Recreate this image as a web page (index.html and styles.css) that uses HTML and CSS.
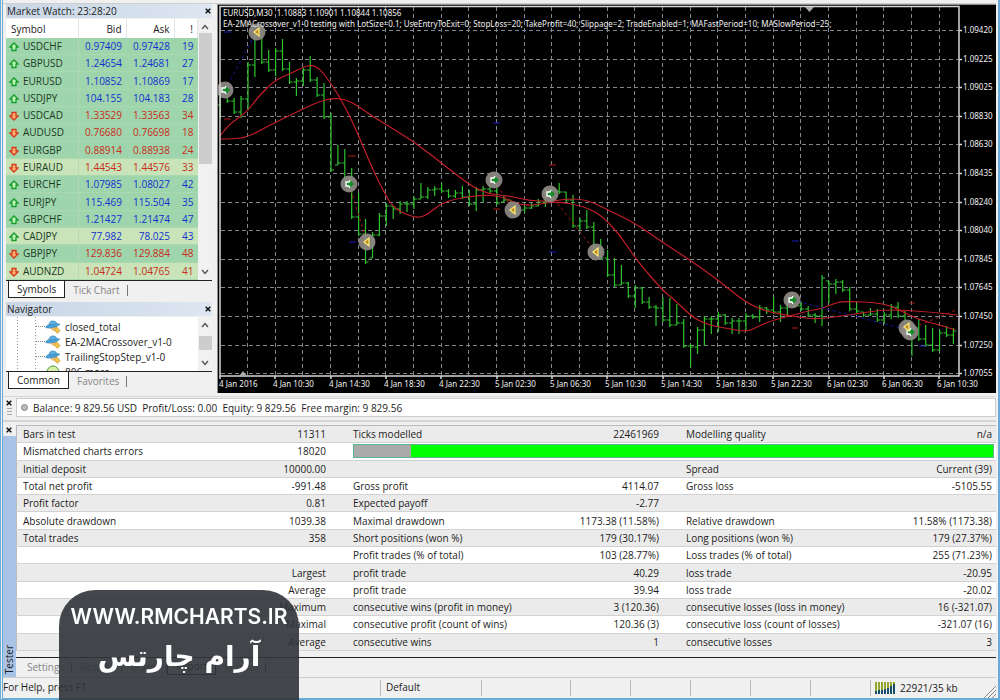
FILE: index.html
```html
<!DOCTYPE html>
<html lang="en">
<head>
<meta charset="utf-8">
<title>Strategy Tester</title>
<link rel="stylesheet" href="styles.css">
</head>
<body>
<svg class="defs" aria-hidden="true">
  <symbol id="up" viewBox="0 0 10 10"><path d="M5 1 9.200 5.200H7V8.500H3V5.200H.8Z" fill="#b9f5b4" stroke="#159a2b" stroke-width="1.300"/></symbol>
  <symbol id="down" viewBox="0 0 10 10"><path d="M5 9 9.200 4.800H7V1.500H3V4.800H.8Z" fill="#ffae70" stroke="#d33b1c" stroke-width="1.300"/></symbol>
  <symbol id="close" viewBox="0 0 6 6"><path d="M.7.7 5.300 5.300M5.300.7.700 5.300" stroke="#111" stroke-width="1.500"/></symbol>
  <symbol id="chev-up" viewBox="0 0 8 6"><path d="M1 5 4 1.500 7 5" fill="none" stroke="#555" stroke-width="1.400"/></symbol>
  <symbol id="chev-down" viewBox="0 0 8 6"><path d="M1 1 4 4.500 7 1" fill="none" stroke="#555" stroke-width="1.400"/></symbol>
  <symbol id="expert" viewBox="0 0 16 14">
    <path d="M3 6.500 8 11 13 5.500Z" fill="#f1c27a"/>
    <path d="M4 5C4 1.800 6 .6 8.500 1 10.500 1.300 12 2.500 12 4.500Z" fill="#5db0e2" stroke="#2f7fb5" stroke-width=".6"/>
    <path d="M.8 7.500C4 8.800 11 7.800 14.800 4.200 13 3.200 11.800 4 10 4.400 7 5.200 4.500 5.300 3.500 4.800 2 5.200.8 6.200.8 7.500Z" fill="#4aa3dc" stroke="#2f7fb5" stroke-width=".6"/>
    <path d="M11.500 7 15 10.500 12.500 13.200 9 10Z" fill="#f5c545" stroke="#b98a1c" stroke-width=".7"/>
  </symbol>
</svg>
<div class="window">
  <div class="toolbar-edge"></div>
  <div class="workspace">
    <aside class="side">
      <section class="panel market">
        <header class="title"><h2>Market Watch: 23:28:20</h2><button class="x" aria-label="Close Market Watch"><svg><use href="#close"/></svg></button></header>
        <div class="scroller">
          <table class="quotes">
            <colgroup><col class="c-sym"><col class="c-price"><col class="c-price"><col class="c-spread"></colgroup>
            <thead><tr><th>Symbol</th><th>Bid</th><th>Ask</th><th>!</th></tr></thead>
            <tbody>
              <tr class="rise"><td><svg><use href="#up"/></svg>USDCHF</td><td>0.97409</td><td>0.97428</td><td>19</td></tr>
              <tr class="rise"><td><svg><use href="#up"/></svg>GBPUSD</td><td>1.24654</td><td>1.24681</td><td>27</td></tr>
              <tr class="rise"><td><svg><use href="#up"/></svg>EURUSD</td><td>1.10852</td><td>1.10869</td><td>17</td></tr>
              <tr class="rise"><td><svg><use href="#up"/></svg>USDJPY</td><td>104.155</td><td>104.183</td><td>28</td></tr>
              <tr class="fall"><td><svg><use href="#down"/></svg>USDCAD</td><td>1.33529</td><td>1.33563</td><td>34</td></tr>
              <tr class="fall"><td><svg><use href="#down"/></svg>AUDUSD</td><td>0.76680</td><td>0.76698</td><td>18</td></tr>
              <tr class="fall"><td><svg><use href="#down"/></svg>EURGBP</td><td>0.88914</td><td>0.88938</td><td>24</td></tr>
              <tr class="fall pale"><td><svg><use href="#down"/></svg>EURAUD</td><td>1.44543</td><td>1.44576</td><td>33</td></tr>
              <tr class="rise"><td><svg><use href="#up"/></svg>EURCHF</td><td>1.07985</td><td>1.08027</td><td>42</td></tr>
              <tr class="rise"><td><svg><use href="#up"/></svg>EURJPY</td><td>115.469</td><td>115.504</td><td>35</td></tr>
              <tr class="rise"><td><svg><use href="#up"/></svg>GBPCHF</td><td>1.21427</td><td>1.21474</td><td>47</td></tr>
              <tr class="rise pale"><td><svg><use href="#up"/></svg>CADJPY</td><td>77.982</td><td>78.025</td><td>43</td></tr>
              <tr class="fall"><td><svg><use href="#down"/></svg>GBPJPY</td><td>129.836</td><td>129.884</td><td>48</td></tr>
              <tr class="fall pale"><td><svg><use href="#down"/></svg>AUDNZD</td><td>1.04724</td><td>1.04765</td><td>41</td></tr>
            </tbody>
          </table>
          <div class="bar"><svg><use href="#chev-up"/></svg><i class="thumb long"></i><svg><use href="#chev-down"/></svg></div>
        </div>
        <nav class="tabs"><button class="tab on">Symbols</button><button class="tab">Tick Chart</button></nav>
      </section>
      <section class="panel navigator">
        <header class="title"><h2>Navigator</h2><button class="x" aria-label="Close Navigator"><svg><use href="#close"/></svg></button></header>
        <div class="scroller">
          <ul class="tree">
            <li><svg><use href="#expert"/></svg>closed_total</li>
            <li><svg><use href="#expert"/></svg>EA-2MACrossover_v1-0</li>
            <li><svg><use href="#expert"/></svg>TrailingStopStep_v1-0</li>
            <li><svg viewBox="0 0 16 14"><circle cx="8" cy="7" r="6" fill="#d8f0a8" stroke="#4d9a4a"/></svg>806 more...</li>
          </ul>
          <div class="bar"><svg><use href="#chev-up"/></svg><i class="thumb short"></i><svg><use href="#chev-down"/></svg></div>
        </div>
        <nav class="tabs"><button class="tab on">Common</button><button class="tab">Favorites</button></nav>
      </section>
    </aside>
    <main class="chart"><svg id="chart" viewBox="218 5 778 388" role="img" aria-label="EURUSD M30 price chart"></svg></main>
  </div>
  <section class="account">
    <div class="grip"><button class="x" aria-label="Close account bar"><svg><use href="#close"/></svg></button><i></i></div>
    <p><i class="dot"></i>Balance: 9 829.56 USD&nbsp; Profit/Loss: 0.00&nbsp; Equity: 9 829.56&nbsp; Free margin: 9 829.56</p>
  </section>
  <section class="tester">
    <div class="spine"><button class="x" aria-label="Close Tester"><svg><use href="#close"/></svg></button><h2>Tester</h2></div>
    <div class="result">
      <table class="report">
        <colgroup><col class="k1"><col class="v1"><col class="k"><col class="v"><col class="k"><col class="v3"></colgroup>
        <tbody>
          <tr><td>Bars in test</td><td>11311</td><td>Ticks modelled</td><td>22461969</td><td>Modelling quality</td><td>n/a</td></tr>
          <tr><td>Mismatched charts errors</td><td>18020</td><td colspan="4" class="quality"><div><i></i></div></td></tr>
          <tr><td>Initial deposit</td><td>10000.00</td><td></td><td></td><td>Spread</td><td>Current (39)</td></tr>
          <tr><td>Total net profit</td><td>-991.48</td><td>Gross profit</td><td>4114.07</td><td>Gross loss</td><td>-5105.55</td></tr>
          <tr><td>Profit factor</td><td>0.81</td><td>Expected payoff</td><td>-2.77</td><td></td><td></td></tr>
          <tr><td>Absolute drawdown</td><td>1039.38</td><td>Maximal drawdown</td><td>1173.38 (11.58%)</td><td>Relative drawdown</td><td>11.58% (1173.38)</td></tr>
          <tr><td>Total trades</td><td>358</td><td>Short positions (won %)</td><td>179 (30.17%)</td><td>Long positions (won %)</td><td>179 (27.37%)</td></tr>
          <tr><td></td><td></td><td>Profit trades (% of total)</td><td>103 (28.77%)</td><td>Loss trades (% of total)</td><td>255 (71.23%)</td></tr>
          <tr><td></td><td>Largest</td><td>profit trade</td><td>40.29</td><td>loss trade</td><td>-20.95</td></tr>
          <tr><td></td><td>Average</td><td>profit trade</td><td>39.94</td><td>loss trade</td><td>-20.02</td></tr>
          <tr><td></td><td>Maximum</td><td>consecutive wins (profit in money)</td><td>3 (120.36)</td><td>consecutive losses (loss in money)</td><td>16 (-321.07)</td></tr>
          <tr><td></td><td>Maximal</td><td>consecutive profit (count of wins)</td><td>120.36 (3)</td><td>consecutive loss (count of losses)</td><td>-321.07 (16)</td></tr>
          <tr><td></td><td>Average</td><td>consecutive wins</td><td>1</td><td>consecutive losses</td><td>3</td></tr>
        </tbody>
      </table>
      <nav class="tabs"><button class="tab">Settings</button><button class="tab">Results</button><button class="tab">Graph</button><button class="tab on">Report</button><button class="tab">Journal</button></nav>
    </div>
  </section>
  <footer class="status">
    <span class="help">For Help, press F1</span><span class="profile">Default</span><span class="w1"></span><span class="w2"></span><span class="w2"></span><span class="w2"></span><span class="w2"></span><span class="w2"></span>
    <span class="net"><svg viewBox="0 0 22 12"><path d="M1 0V12M4 0V12M7 0V12M10 0V12M13 0V12M16 0V12M19 0V12" stroke="#94a52e" stroke-width="2"/><path d="M1 9V12M4 8V12M7 8V12M10 7V12M13 6V12M16 4V12M19 2V12" stroke="#164d6b" stroke-width="2"/></svg>22921/35 kb</span>
    <svg class="size" viewBox="0 0 12 12"><path d="M0 12 12 0M4 12 12 4M8 12 12 8" stroke="#888"/></svg>
  </footer>
</div>
<div class="watermark"><strong>WWW.RMCHARTS.IR</strong><b lang="fa" dir="rtl">آرام چارتس</b></div>
<script src="chart.js"></script>
</body>
</html>
```
FILE: styles.css
```css
* { box-sizing: border-box; }
body {
  margin: 0;
  background: #f0f0f0;
  color: #1c1c1c;
  font: 10px/14px "Open Sans", "Noto Sans", sans-serif;
}
h2, p, ul { margin: 0; padding: 0; font-size: inherit; font-weight: normal; }
button { border: 0; padding: 0; background: none; font: inherit; color: inherit; }
table { border-collapse: collapse; table-layout: fixed; }
.defs { position: absolute; width: 0; height: 0; }

.window {
  display: flex;
  flex-direction: column;
  min-height: 100vh;
  padding-right: 2px;
  border: solid #69acd8;
  border-width: 0 2px 2px 0;
  border-left: 3px double #69acd8;
}
.toolbar-edge { height: 4px; border-bottom: 1px solid #cfcfcf; }
.workspace { display: flex; align-items: flex-start; gap: 2px; }
.side { width: 212px; flex: none; padding: 0 3px; }
.chart { flex: 1; min-width: 0; background: #000; border: solid #8f8f8f; border-width: 1px 0 0 1px; }
.chart svg { display: block; width: 100%; height: auto; }

.title {
  display: flex;
  justify-content: space-between;
  align-items: center;
  height: 14px;
  padding: 0 1px;
  background: linear-gradient(90deg, #c9d6e6, #dde6f1);
}
.x { display: flex; padding: 0; }
.x svg { width: 6px; height: 6px; }
.scroller { display: flex; background: #fff; }
.bar {
  display: flex;
  flex-direction: column;
  align-items: center;
  width: 14px;
  padding: 5px 0;
  background: #f1f1f1;
}
.bar svg { width: 8px; height: 6px; flex: none; }
.bar svg:last-child { margin-top: auto; }
.thumb { width: 13px; margin-top: 3px; background: #cdcdcd; }
.long { height: 131px; }
.short { height: 14px; margin-top: 8px; }

.market .title { margin-bottom: 1px; }
.market .scroller { height: 261px; }
.quotes { flex: 1; height: 261px; }
.quotes thead tr { height: 19px; }
.c-sym { width: 72px; }
.c-price { width: 48px; }
.quotes th { font-weight: normal; text-align: right; border-right: 1px solid #e4e4e4; }
.quotes th, .quotes td { padding: 0 4px 0 0; line-height: 14px; white-space: nowrap; }
.quotes th:first-child { text-align: left; padding-left: 5px; }
.quotes td { text-align: right; }
.quotes td:first-child { text-align: left; color: #1b3a25; border-right: 1px solid #b4d9b4; }
.quotes td:first-child svg { width: 10px; height: 10px; margin: 0 4px 0 3px; vertical-align: -2px; }
.quotes tbody tr { background: #9fd5ac; border-bottom: 1px solid #a9d8b1; }
.quotes tbody .pale { background: #c8e4b8; }
.rise { color: #1231cf; }
.fall { color: #c92b21; }

.tabs { display: flex; align-items: flex-start; border-top: 1px solid #222; padding-left: 2px; color: #858585; }
.tab { height: 17px; padding: 0 8px; position: relative; }
.tab:not(.on)::after { content: ""; position: absolute; right: 0; top: 4px; height: 11px; border-right: 1px solid #777; }
.tab.on { background: #fff; color: #1c1c1c; border: 1px solid #222; border-top: 0; }
.side .tabs { height: 22px; }

.tree { flex: 1; height: 54px; padding-top: 2px; overflow: hidden; list-style: none; background: repeating-linear-gradient(#999 0 1px, transparent 1px 3px) 11px 0 / 1px 100% no-repeat, repeating-linear-gradient(#999 0 1px, transparent 1px 3px) 29px 0 / 1px 100% no-repeat; }
.tree li { display: flex; align-items: center; gap: 4px; height: 15px; padding-left: 30px; }
.tree li::before { content: ""; width: 9px; margin-right: -4px; border-top: 1px dotted #888; }
.tree svg { width: 16px; height: 14px; }
.navigator .title { margin-bottom: 1px; }
.navigator .bar { height: 54px; }

.account { display: flex; margin-top: 3px; padding: 1px 0 1px 1px; border-top: 1px solid #d8d8d8; border-bottom: 2px solid #d4d4d4; }
.grip { width: 12px; padding: 2px; }
.grip i { display: block; width: 5px; height: 7px; margin: 2px 1px; background: repeating-linear-gradient(#aaa 0 1px, transparent 1px 3px); }
.account p { flex: 1; display: flex; align-items: center; gap: 5px; height: 19px; padding-left: 4px; background: #fff; border: 1px solid #ccc; }
.dot { width: 7px; height: 7px; border-radius: 50%; border: 1px solid #888; background: #bbb; }

.tester { display: flex; flex: 1; margin-top: 3px; }
.spine { display: flex; flex-direction: column; justify-content: space-between; width: 13px; background: linear-gradient(#f0f0f0 11px, #a9c3e6 11px); }
.spine .x { padding: 2px 3px; }
.spine h2 { writing-mode: vertical-rl; transform: rotate(180deg); padding-top: 3px; line-height: 13px; }
.result { flex: 1; }
.report { width: 100%; height: 226px; border: solid #bbb; border-width: 1px 0 0 1px; margin-bottom: 6px; background: #fff; }
.report td { padding: 0 6px; border-bottom: 1px solid #d2d2d2; line-height: 14px; white-space: nowrap; }
.report tr:nth-child(odd) { background: #ebebeb; }
.report td:nth-child(even) { text-align: right; padding-right: 4px; }
.k1 { width: 18%; }
.v1 { width: 14%; }
.k { width: 18%; }
.v { width: 16%; }
.report td:nth-child(3), .report td:nth-child(5) { padding-left: 23px; }
.report .quality { padding: 0 2px 0 21px; }
.quality div { height: 14px; background: #0f0; border: 1px solid #5cb58a; }
.quality i { display: block; width: 9%; height: 12px; background: #aaa; }
.result .tabs { height: 20px; padding-left: 3px; }

.status { display: flex; align-items: center; height: 21px; border-top: 1px solid #ccc; }
.status span { height: 16px; border-left: 1px solid #bbb; }
.status .help { flex: 1; border: 0; }
.status .profile { width: 101px; padding-left: 5px; }
.w1 { width: 89px; }
.w2 { width: 60px; }
.status .net { display: flex; align-items: center; gap: 3px; width: 114px; padding-left: 4px; }
.net svg { width: 22px; height: 12px; }
.size { width: 12px; height: 12px; align-self: flex-end; }

.watermark {
  position: fixed;
  left: 59px;
  bottom: 0;
  display: flex;
  flex-direction: column;
  align-items: center;
  width: 240px;
  height: 110px;
  padding-top: 10px;
  border-radius: 36px 36px 0 0;
  background: rgba(48, 52, 56, .9);
  color: #fff;
  font-family: Inter, sans-serif;
}
.watermark strong { font-size: 21px; line-height: 34px; font-weight: 600; }
.watermark b { font: bold 28px/46px "DejaVu Sans", sans-serif; }

.frame { fill: none; stroke: #d8d8d8; stroke-width: 1.5; }
.grid { fill: none; stroke: #7f868c; stroke-dasharray: 4 3; }
.candles { fill: none; stroke: #2fc42f; stroke-width: 1.2; }
.average { fill: none; stroke: #c41e28; stroke-width: 1.2; }
.sell { fill: none; stroke: #a01818; stroke-dasharray: 3 3; }
.buy { fill: none; stroke: #1414a0; stroke-dasharray: 3 3; }
.level-r { stroke: #b01818; }
.level-b { stroke: #1818c0; }
.halo { fill: #8f8a84; fill-opacity: .92; }
.entry { fill: #148a28; }
.entry-edge { fill: none; stroke: #fff; stroke-width: 1.3; }
.exit { fill: #c08a20; stroke: #f8e878; stroke-width: 1.3; }
.mark { fill: #aaa; }
.label { fill: #f0f0f0; font: 8px "Noto Sans", sans-serif; }
```
FILE: chart.js
```js
const chart = document.getElementById("chart");
const parts = [];
const path = (cls, d) => parts.push(`<path class="${cls}" d="${d}"/>`);
const text = (x, y, s) => parts.push(`<text class="label" x="${x}" y="${y}">${s}</text>`);

const prices = ["1.09420", "1.09225", "1.09025", "1.08830", "1.08630", "1.08435", "1.08240", "1.08040", "1.07845", "1.07645", "1.07450", "1.07250", "1.07055"];
const times = ["4 Jan 2016", "4 Jan 10:30", "4 Jan 14:30", "4 Jan 18:30", "4 Jan 22:30", "5 Jan 02:30", "5 Jan 06:30", "5 Jan 10:30", "5 Jan 14:30", "5 Jan 18:30", "5 Jan 22:30", "6 Jan 02:30", "6 Jan 06:30", "6 Jan 10:30"];

// High and low of each half-hour bar, in chart units
const bars = [[87,118],[83,103],[98,114],[96,118],[62,110],[33,77],[27,64],[50,72],[48,76],[39,71],[62,84],[78,96],[67,86],[56,82],[77,97],[83,119],[113,172],[145,165],[149,180],[168,219],[193,236],[219,264],[232,258],[213,236],[203,226],[206,219],[201,214],[201,212],[196,209],[183,199],[187,199],[186,196],[183,193],[189,198],[190,198],[186,199],[190,206],[187,211],[186,202],[180,193],[185,205],[196,202],[200,215],[207,215],[205,213],[203,209],[199,206],[187,207],[188,200],[183,194],[192,202],[195,228],[218,230],[210,229],[222,250],[239,260],[250,277],[258,287],[265,285],[282,298],[285,308],[287,304],[297,309],[305,326],[297,322],[298,327],[304,325],[319,348],[344,367],[327,354],[316,346],[316,334],[312,332],[314,325],[318,334],[318,334],[313,331],[314,319],[305,322],[307,314],[297,314],[305,322],[300,316],[297,308],[302,311],[306,317],[313,323],[275,326],[281,303],[279,294],[280,292],[287,311],[303,313],[312,317],[308,316],[309,322],[312,324],[304,319],[302,318],[310,335],[325,356],[319,341],[325,347],[328,352],[330,351],[326,337],[328,344]];

let grid = "";
for (let k = 0; k < 26; k++) grid += `M${Math.round(247 + k * 27.67) + .5} 7V375`;
prices.forEach((p, i) => {
  const y = Math.round(30 + i * 28.6);
  grid += `M221 ${y + .5}H958`;
});
path("grid", grid);

let d = "";
let prev = 105;
bars.forEach(([hi, lo], i) => {
  const x = (220.3 + i * 6.916).toFixed(1);
  const next = bars[i + 1] || [hi, lo];
  const open = Math.min(lo, Math.max(hi, prev));
  const close = next[0] + next[1] > hi + lo ? lo - 2 : hi + 3;
  d += `M${x} ${hi}V${lo}M${x} ${open}h-3M${x} ${close}h3`;
  prev = close;
});
path("candles", d);

const curve = pts => {
  let s = `M${pts[0]}`;
  for (let i = 1; i < pts.length - 1; i++) {
    const [x, y] = pts[i], [u, v] = pts[i + 1];
    s += `Q${x} ${y} ${(x + u) / 2} ${(y + v) / 2}`;
  }
  return s + `L${pts[pts.length - 1]}`;
};
path("average", curve([[220,136],[228,125],[247,112],[258,97],[275,80],[290,74],[303,67],[312,65],[320,69],[330,82],[342,101],[355,127],[372,168],[387,198],[393,206],[402,213],[417,218],[427,215],[440,204],[455,199],[480,195],[500,196],[513,202],[527,206],[545,203],[560,202],[577,205],[590,209],[603,217],[620,235],[635,258],[662,290],[676,301],[692,317],[708,325],[725,328],[747,332],[757,327],[770,321],[790,316],[808,311],[820,309],[833,304],[843,301],[885,303],[905,313],[920,320],[940,325],[955,330]]));
path("average", curve([[220,139],[232,139],[248,137],[270,125],[303,109],[320,101],[335,98],[347,100],[358,106],[375,118],[415,142],[450,170],[481,193],[510,196],[530,201],[555,201],[565,199],[580,199],[592,202],[610,211],[635,223],[662,242],[690,260],[718,280],[745,302],[765,311],[785,315],[805,318],[818,319],[850,315],[880,310],[900,310],[930,312],[957,315]]));

path("sell", "M349 184 367 242M494 180 513 210M550 194 596 252M908 330 956 310");
path("buy", "M225 90 254 36M792 300 908 330");
path("level-r", "M224 119h7M348 156h8M493 209h7M549 165h7M792 328h6M909 303h6");
path("level-b", "M224 32h7M349 242h7M493 123h7M549 252h7M792 241h7M919 346h7");

const halo = (x, y) => parts.push(`<circle class="halo" cx="${x}" cy="${y}" r="8.5"/>`);
[[225,90],[349,184],[494,180],[550,194],[792,300],[910,332]].forEach(([x, y], i) => {
  halo(x, y);
  if (i === 5) halo(907, 328);
  path("entry", `M${x + 1} ${y - 4}l4 4-4 4-4-4Z`);
  path("entry-edge", `M${x + 1} ${y - 4}l-1 2h-3v4h3l1 2`);
});
[[257,32],[367,242],[513,210],[596,252],[907,327]].forEach(([x, y], i) => {
  if (i < 4) halo(x, y);
  path("exit", `M${x - 3} ${y}l5-4v8Z`);
});

path("frame", "M220 6.500H959V376H220Z");
path("mark", "M239 376l4-5 4 5ZM805 7h9l-4.500 5Z");
let ticks = "";
prices.forEach((p, i) => {
  const y = Math.round(30 + i * 28.6);
  ticks += `M959 ${y + .5}h3`;
  text(963, y + 3, p);
});
times.forEach((t, i) => {
  const x = Math.round(219 + i * 55.34);
  ticks += `M${x + 1} 376v3`;
  text(i ? x - 1 : x, 387, t);
});
path("frame", ticks);
text(223, 16, "EURUSD,M30&#160; 1.10883 1.10901 1.10844 1.10856");
text(223, 27, "EA-2MACrossover_v1-0 testing with LotSize=0.1; UseEntryToExit=0; StopLoss=20; TakeProfit=40; Slippage=2; TradeEnabled=1; MAFastPeriod=10; MASlowPeriod=25;");
chart.innerHTML = parts.join("");
```
